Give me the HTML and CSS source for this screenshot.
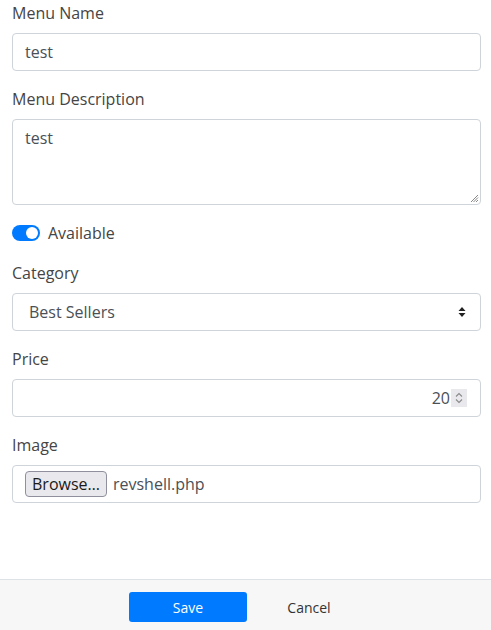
FILE: index.html
```html
<!DOCTYPE html>
<html>
<head>
<meta charset="utf-8">
<link rel="stylesheet" href="styles.css">
</head>
<body>
<div class="page">
  <form class="form">
    <div class="group">
      <label class="label">Menu Name</label>
      <div class="control">test</div>
    </div>
    <div class="group">
      <label class="label">Menu Description</label>
      <div class="control textarea">test
        <svg class="grip" width="10" height="10" viewBox="0 0 10 10"><path d="M9 2L2 9M9 4.5L4.5 9M9 7L7 9" stroke="#888" stroke-width="1" fill="none"/></svg>
      </div>
    </div>
    <div class="group switch-row">
      <span class="switch"><span class="knob"></span></span>
      <span class="switch-label">Available</span>
    </div>
    <div class="group">
      <label class="label">Category</label>
      <div class="control select">
        <span>Best Sellers</span>
        <svg class="caret" width="8" height="12" viewBox="0 0 8 12"><path d="M4 1L7.5 5H0.5Z M4 11L0.5 7H7.5Z" fill="#222"/></svg>
      </div>
    </div>
    <div class="group">
      <label class="label">Price</label>
      <div class="control number">
        <span>20</span>
        <span class="spin"><svg width="10" height="14" viewBox="0 0 10 14"><path d="M2 5.5L5 2.5L8 5.5M2 8.5L5 11.5L8 8.5" stroke="#8a8a8a" stroke-width="1.1" fill="none"/></svg></span>
      </div>
    </div>
    <div class="group">
      <label class="label">Image</label>
      <div class="control file">
        <span class="browse">Browse…</span>
        <span class="filename">revshell.php</span>
      </div>
    </div>
  </form>
  <div class="footer">
    <button class="btn btn-primary" type="button">Save</button>
    <button class="btn btn-link" type="button">Cancel</button>
  </div>
</div>
</body>
</html>
```
FILE: styles.css
```css
* { box-sizing: border-box; }
html, body { margin: 0; padding: 0; }
body {
  font-family: "Open Sans", "Noto Sans", sans-serif;
  font-size: 16px;
  line-height: 24px;
  color: #495057;
  background: #fff;
  width: 491px;
  height: 630px;
  overflow: hidden;
}
.page {
  display: flex;
  flex-direction: column;
  height: 630px;
}
.form {
  flex: 1;
  padding: 1px 10px 0 12px;
}
.group { margin-bottom: 16px; }
.label {
  display: block;
  margin-bottom: 8px;
  color: #454545;
}
.control {
  position: relative;
  height: 38px;
  border: 1px solid #ced4da;
  border-radius: 4px;
  padding: 6px 12px;
  color: #495057;
  background: #fff;
}
.textarea { height: 86px; }
.grip { position: absolute; right: 1px; bottom: 1px; }
.switch-row {
  display: flex;
  align-items: center;
  height: 24px;
}
.switch {
  position: relative;
  width: 28px;
  height: 16px;
  border-radius: 8px;
  background: #007bff;
  margin-right: 8px;
}
.knob {
  position: absolute;
  top: 2px;
  left: 14px;
  width: 12px;
  height: 12px;
  border-radius: 50%;
  background: #fff;
}
.switch-label { color: #454545; }
.select {
  display: flex;
  align-items: center;
  justify-content: space-between;
  padding-left: 16px;
  padding-right: 14px;
}
.number {
  display: flex;
  align-items: center;
  justify-content: flex-end;
  padding-right: 13px;
}
.spin {
  display: flex;
  align-items: center;
  justify-content: center;
  width: 16px;
  height: 18px;
  background: #e9e9ed;
  margin-left: 1px;
}
.file {
  display: flex;
  align-items: center;
  padding-left: 12px;
}
.browse {
  display: inline-flex;
  align-items: center;
  height: 26px;
  padding: 0 6px;
  background: #e9e9ed;
  border: 1px solid #8f8f9d;
  border-radius: 4px;
  color: #1a1a1a;
  font-size: 16px;
  margin-right: 6px;
}
.filename { color: #495057; }
.footer {
  height: 51px;
  border-top: 1px solid #dee2e6;
  background: #f7f7f7;
  display: flex;
  justify-content: center;
  align-items: flex-start;
  padding-top: 12px;
  padding-left: 6px;
  gap: 3px;
}
.btn {
  width: 118px;
  height: 30px;
  font-family: "Open Sans", "Noto Sans", sans-serif;
  font-size: 14px;
  line-height: 20px;
  border: none;
  border-radius: 3px;
  padding: 1px 0 0;
}
.btn-primary { background: #007bff; color: #fff; }
.btn-link { background: transparent; color: #333; }
```
